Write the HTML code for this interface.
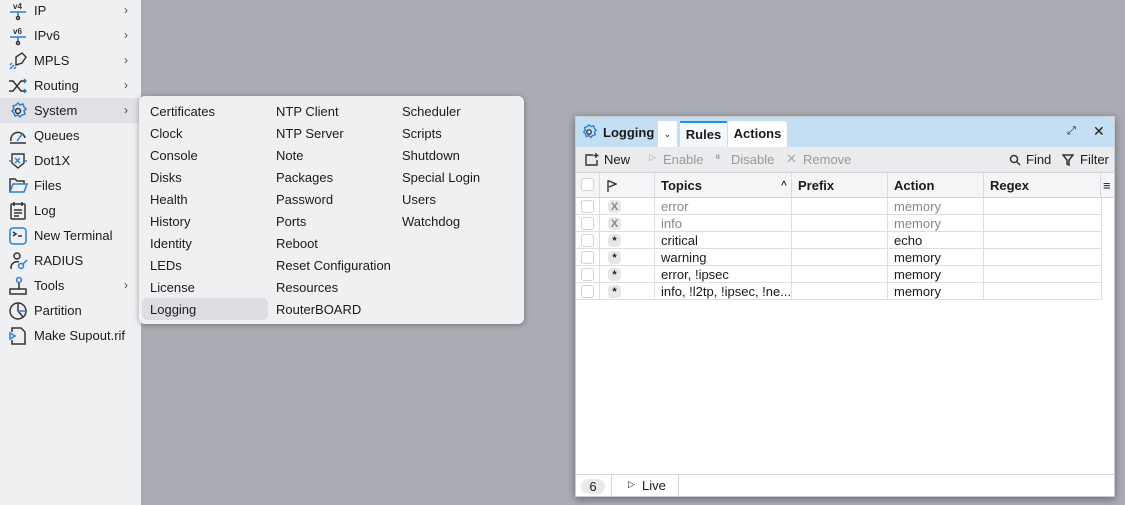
<!DOCTYPE html>
<html><head><meta charset="utf-8"><style>
*{box-sizing:border-box;margin:0;padding:0}
body{width:1125px;height:505px;background:#a9adb3;font-family:"Liberation Sans",sans-serif;font-size:13px;color:#1b1b1b;position:relative;overflow:hidden}
.side{position:absolute;left:0;top:0;width:141px;height:505px;background:#eff0f2}
.si{position:absolute;left:0;width:141px;height:25px;line-height:25px}
.si span{position:absolute;left:34px}
.si .ar{left:124px;font-size:12px;color:#444}
.si svg{position:absolute;left:8px;top:3px}
.menu{position:absolute;left:139px;top:96px;width:385px;height:228px;background:#eff0f2;border-radius:6px;box-shadow:0 1px 6px rgba(0,0,0,.35)}
.mi{position:absolute;height:22px;line-height:22px}
.win{position:absolute;left:575px;top:116px;width:540px;height:381px;background:#fff;box-shadow:0 2px 8px rgba(0,0,0,.4);border:1px solid #c9ccd0}
.hd{position:absolute;left:0;top:0;width:538px;height:30px;background:#c4dff3}
.tb{position:absolute;left:0;top:30px;width:538px;height:26px;background:#eaebec;border-bottom:1px solid #d3d5d8}
.abs{position:absolute}
.th{position:absolute;top:56px;height:25px;line-height:25px;font-weight:bold;border-right:1px solid #d8dadd;border-bottom:1px solid #d3d5d8;background:#f4f5f6;padding-left:6px}
.row{position:absolute;left:0;height:17px;width:526px;border-bottom:1px solid #dcdee1}
.c{position:absolute;top:0;height:17px;line-height:17px;border-right:1px solid #dcdee1}
.cb{width:13px;height:13px;border:1px solid #d0d2d5;border-radius:3px;position:absolute;left:5px;top:2px;background:#fff}
.bd{position:absolute;left:8px;top:2px;width:13px;height:13px;border-radius:4px;background:#e6e7e9;font-size:11px;line-height:14px;text-align:center;font-weight:bold}
.g{color:#888}
</style></head><body>
<div class="side">
<div class="si" style="top:-2px;"><svg width="20" height="20" viewBox="0 0 20 20" fill="none" stroke="#2a7fd4" stroke-width="1.5"><path d="M2 11h16M10 11v4"/><circle cx="10" cy="17" r="1.5" stroke="#333"/><text x="5" y="8" font-size="8" fill="#333" stroke="none" font-family="Liberation Sans" font-weight="bold">v4</text></svg><span>IP</span><span class="ar">›</span></div>
<div class="si" style="top:23px"><svg width="20" height="20" viewBox="0 0 20 20" fill="none" stroke="#2a7fd4" stroke-width="1.5"><path d="M2 11h16M10 11v4"/><circle cx="10" cy="17" r="1.5" stroke="#333"/><text x="5" y="8" font-size="8" fill="#333" stroke="none" font-family="Liberation Sans" font-weight="bold">v6</text></svg><span>IPv6</span><span class="ar">›</span></div>
<div class="si" style="top:48px"><svg width="20" height="20" viewBox="0 0 20 20" fill="none" stroke="#333" stroke-width="1.4"><path d="M8 6l6-4 4 4-4 6-6 2z"/><path d="M6 14l-4 4M4 12l-2 2M8 16l-2 2" stroke="#2a7fd4"/></svg><span>MPLS</span><span class="ar">›</span></div>
<div class="si" style="top:73px"><svg width="20" height="20" viewBox="0 0 20 20" fill="none" stroke="#333" stroke-width="1.5"><path d="M1 5h4l8 10h5M1 15h4l8-10h5" /><path d="M16 3l2 2-2 2M16 13l2 2-2 2" stroke="#2a7fd4"/></svg><span>Routing</span><span class="ar">›</span></div>
<div class="si" style="top:98px;background:#dfe1e4"><svg width="20" height="20" viewBox="0 0 20 20" fill="none" stroke="#2a7fd4" stroke-width="1.5"><circle cx="10" cy="10" r="2.5" stroke="#333"/><path d="M10 2l2 2 3-1 1 3 2 2-2 2 1 3-3 1-2 2-2-2-3 1-1-3-2-2 2-2-1-3 3-1z"/></svg><span>System</span><span class="ar">›</span></div>
<div class="si" style="top:123px"><svg width="20" height="20" viewBox="0 0 20 20" fill="none" stroke="#333" stroke-width="1.5"><path d="M3 15a7 7 0 0 1 14-3M2 17h16"/><path d="M9 15l6-8" stroke="#2a7fd4"/></svg><span>Queues</span></div>
<div class="si" style="top:148px"><svg width="20" height="20" viewBox="0 0 20 20" fill="none" stroke="#333" stroke-width="1.4"><path d="M4 3h12v9l-6 5-6-5z"/><path d="M7 7l5 5M12 7l-5 5M1 10h3M16 10h3" stroke="#2a7fd4"/></svg><span>Dot1X</span></div>
<div class="si" style="top:173px"><svg width="20" height="20" viewBox="0 0 20 20" fill="none" stroke="#2a7fd4" stroke-width="1.5"><path d="M2 16V3h5l2 2h7v3" stroke="#333"/><path d="M2 16l3-8h14l-3 8z"/></svg><span>Files</span></div>
<div class="si" style="top:198px"><svg width="20" height="20" viewBox="0 0 20 20" fill="none" stroke="#333" stroke-width="1.5"><rect x="3" y="3" width="14" height="15" rx="1"/><path d="M6 1v4M14 1v4M6 9h8M6 12h8M6 15h5"/></svg><span>Log</span></div>
<div class="si" style="top:223px"><svg width="20" height="20" viewBox="0 0 20 20" fill="none" stroke="#2a7fd4" stroke-width="1.5"><rect x="2" y="2" width="16" height="16" rx="3"/><path d="M5 6l3 2-3 2M10 10h4" stroke="#333"/></svg><span>New Terminal</span></div>
<div class="si" style="top:248px"><svg width="20" height="20" viewBox="0 0 20 20" fill="none" stroke="#333" stroke-width="1.5"><circle cx="9" cy="5" r="3"/><path d="M3 18v-2a6 6 0 0 1 8-5"/><circle cx="13" cy="15" r="2.5" stroke="#2a7fd4"/><path d="M15 13l4-4" stroke="#2a7fd4"/></svg><span>RADIUS</span></div>
<div class="si" style="top:273px"><svg width="20" height="20" viewBox="0 0 20 20" fill="none" stroke="#333" stroke-width="1.5"><circle cx="11" cy="4" r="2.5" stroke="#2a7fd4"/><path d="M11 7v6M2 13h16v5H2z"/></svg><span>Tools</span><span class="ar">›</span></div>
<div class="si" style="top:298px"><svg width="20" height="20" viewBox="0 0 20 20" fill="none" stroke="#333" stroke-width="1.5"><circle cx="10" cy="10" r="8"/><path d="M10 2v8l5 6" /><path d="M10 10h8" stroke="#2a7fd4"/></svg><span>Partition</span></div>
<div class="si" style="top:323px"><svg width="20" height="20" viewBox="0 0 20 20" fill="none" stroke="#333" stroke-width="1.5"><path d="M4 6V2h9l4 4v12H4v-4"/><path d="M2 7l5 3-5 3z" stroke="#2a7fd4"/></svg><span>Make Supout.rif</span></div>
</div>

<div class="menu">
<div class="abs" style="left:3px;top:202px;width:126px;height:22px;background:#dcdee1;border-radius:5px"></div>
<div class="mi" style="left:11px;top:5px">Certificates</div><div class="mi" style="left:11px;top:27px">Clock</div><div class="mi" style="left:11px;top:49px">Console</div><div class="mi" style="left:11px;top:71px">Disks</div><div class="mi" style="left:11px;top:93px">Health</div><div class="mi" style="left:11px;top:115px">History</div><div class="mi" style="left:11px;top:137px">Identity</div><div class="mi" style="left:11px;top:159px">LEDs</div><div class="mi" style="left:11px;top:181px">License</div><div class="mi" style="left:11px;top:203px">Logging</div>
<div class="mi" style="left:137px;top:5px">NTP Client</div><div class="mi" style="left:137px;top:27px">NTP Server</div><div class="mi" style="left:137px;top:49px">Note</div><div class="mi" style="left:137px;top:71px">Packages</div><div class="mi" style="left:137px;top:93px">Password</div><div class="mi" style="left:137px;top:115px">Ports</div><div class="mi" style="left:137px;top:137px">Reboot</div><div class="mi" style="left:137px;top:159px">Reset Configuration</div><div class="mi" style="left:137px;top:181px">Resources</div><div class="mi" style="left:137px;top:203px">RouterBOARD</div>
<div class="mi" style="left:263px;top:5px">Scheduler</div><div class="mi" style="left:263px;top:27px">Scripts</div><div class="mi" style="left:263px;top:49px">Shutdown</div><div class="mi" style="left:263px;top:71px">Special Login</div><div class="mi" style="left:263px;top:93px">Users</div><div class="mi" style="left:263px;top:115px">Watchdog</div>
</div>

<div class="win">
<div class="hd">
<svg class="abs" style="left:4px;top:6px" width="18" height="18" viewBox="0 0 20 20" fill="none" stroke="#2a7fd4" stroke-width="1.5"><circle cx="10" cy="10" r="2.5" stroke="#333"/><path d="M10 2l2 2 3-1 1 3 2 2-2 2 1 3-3 1-2 2-2-2-3 1-1-3-2-2 2-2-1-3 3-1z"/></svg>
<div class="abs" style="left:27px;top:8px;font-weight:bold">Logging</div>
<div class="abs" style="left:82px;top:4px;width:19px;height:26px;background:#fff;text-align:center;line-height:26px;font-size:9px">⌄</div>
<div class="abs" style="left:104px;top:4px;width:47px;height:26px;background:#f3f8fc;border-top:2px solid #2a8ee0;text-align:center;line-height:23px;font-weight:bold">Rules</div>
<div class="abs" style="left:152px;top:4px;width:59px;height:26px;background:#fff;text-align:center;line-height:26px;font-weight:bold;border-radius:0 4px 0 0">Actions</div>
<div class="abs" style="left:491px;top:8px;font-size:11px">⤢</div>
<div class="abs" style="left:517px;top:6px;font-size:14px">✕</div>
</div>
<div class="tb">
<svg class="abs" style="left:9px;top:6px" width="14" height="13" viewBox="0 0 14 13" fill="none" stroke="#333" stroke-width="1.4"><path d="M8 2H1v10h11V7M11 0v5M8.5 2.5h5"/></svg>
<div class="abs" style="left:28px;top:5px">New</div>
<div class="abs g" style="left:73px;top:5px;color:#aaa;font-size:9px">▷</div><div class="abs" style="left:87px;top:5px;color:#999">Enable</div>
<div class="abs" style="left:139px;top:4px;color:#aaa;font-size:11px">⏸</div><div class="abs" style="left:155px;top:5px;color:#999">Disable</div>
<div class="abs" style="left:210px;top:4px;color:#aaa">✕</div><div class="abs" style="left:227px;top:5px;color:#999">Remove</div>
<svg class="abs" style="left:433px;top:7px" width="12" height="12" viewBox="0 0 12 12" fill="none" stroke="#333" stroke-width="1.5"><circle cx="5" cy="5" r="3.5"/><path d="M7.5 7.5l3.5 3.5"/></svg>
<div class="abs" style="left:450px;top:5px">Find</div>
<svg class="abs" style="left:486px;top:7px" width="12" height="12" viewBox="0 0 12 12" fill="none" stroke="#333" stroke-width="1.5"><path d="M1 1h10L7 6v5L5 10V6z"/></svg>
<div class="abs" style="left:504px;top:5px">Filter</div>
</div>
<div class="th" style="left:0;width:24px"><div class="cb" style="top:5px;left:5px"></div></div>
<div class="th" style="left:24px;width:55px"><svg class="abs" style="left:7px;top:7px" width="10" height="12" viewBox="0 0 10 12" fill="none" stroke="#333" stroke-width="1.4"><path d="M1 12V1h1l7 3-7 3"/></svg></div>
<div class="th" style="left:79px;width:137px">Topics<span class="abs" style="left:126px;top:0;font-size:10px">^</span></div>
<div class="th" style="left:216px;width:96px">Prefix</div>
<div class="th" style="left:312px;width:96px">Action</div>
<div class="th" style="left:408px;width:117px">Regex</div>
<div class="th" style="left:525px;width:13px;padding-left:2px;font-weight:normal;border-right:none">≡</div>

<div class="row" style="top:81px"><div class="c" style="left:0;width:24px"><div class="cb"></div></div><div class="c" style="left:24px;width:55px"><div class="bd g">X</div></div><div class="c g" style="left:79px;width:137px;padding-left:6px">error</div><div class="c" style="left:216px;width:96px"></div><div class="c g" style="left:312px;width:96px;padding-left:6px">memory</div><div class="c" style="left:408px;width:118px"></div></div>
<div class="row" style="top:98px"><div class="c" style="left:0;width:24px"><div class="cb"></div></div><div class="c" style="left:24px;width:55px"><div class="bd g">X</div></div><div class="c g" style="left:79px;width:137px;padding-left:6px">info</div><div class="c" style="left:216px;width:96px"></div><div class="c g" style="left:312px;width:96px;padding-left:6px">memory</div><div class="c" style="left:408px;width:118px"></div></div>
<div class="row" style="top:115px"><div class="c" style="left:0;width:24px"><div class="cb"></div></div><div class="c" style="left:24px;width:55px"><div class="bd">*</div></div><div class="c" style="left:79px;width:137px;padding-left:6px">critical</div><div class="c" style="left:216px;width:96px"></div><div class="c" style="left:312px;width:96px;padding-left:6px">echo</div><div class="c" style="left:408px;width:118px"></div></div>
<div class="row" style="top:132px"><div class="c" style="left:0;width:24px"><div class="cb"></div></div><div class="c" style="left:24px;width:55px"><div class="bd">*</div></div><div class="c" style="left:79px;width:137px;padding-left:6px">warning</div><div class="c" style="left:216px;width:96px"></div><div class="c" style="left:312px;width:96px;padding-left:6px">memory</div><div class="c" style="left:408px;width:118px"></div></div>
<div class="row" style="top:149px"><div class="c" style="left:0;width:24px"><div class="cb"></div></div><div class="c" style="left:24px;width:55px"><div class="bd">*</div></div><div class="c" style="left:79px;width:137px;padding-left:6px">error, !ipsec</div><div class="c" style="left:216px;width:96px"></div><div class="c" style="left:312px;width:96px;padding-left:6px">memory</div><div class="c" style="left:408px;width:118px"></div></div>
<div class="row" style="top:166px"><div class="c" style="left:0;width:24px"><div class="cb"></div></div><div class="c" style="left:24px;width:55px"><div class="bd">*</div></div><div class="c" style="left:79px;width:137px;padding-left:6px;white-space:nowrap;overflow:hidden">info, !l2tp, !ipsec, !ne...</div><div class="c" style="left:216px;width:96px"></div><div class="c" style="left:312px;width:96px;padding-left:6px">memory</div><div class="c" style="left:408px;width:118px"></div></div>

<div class="abs" style="left:0;top:357px;width:538px;height:22px;border-top:1px solid #d3d5d8"></div>
<div class="abs" style="left:5px;top:362px;width:24px;height:15px;border-radius:8px;background:#e8e9eb;text-align:center;line-height:15px">6</div>
<div class="abs" style="left:35px;top:358px;width:1px;height:21px;background:#d3d5d8"></div>
<div class="abs" style="left:52px;top:362px;font-size:9px">▷</div>
<div class="abs" style="left:66px;top:361px">Live</div>
<div class="abs" style="left:102px;top:358px;width:1px;height:21px;background:#d3d5d8"></div>
</div>
</body></html>
